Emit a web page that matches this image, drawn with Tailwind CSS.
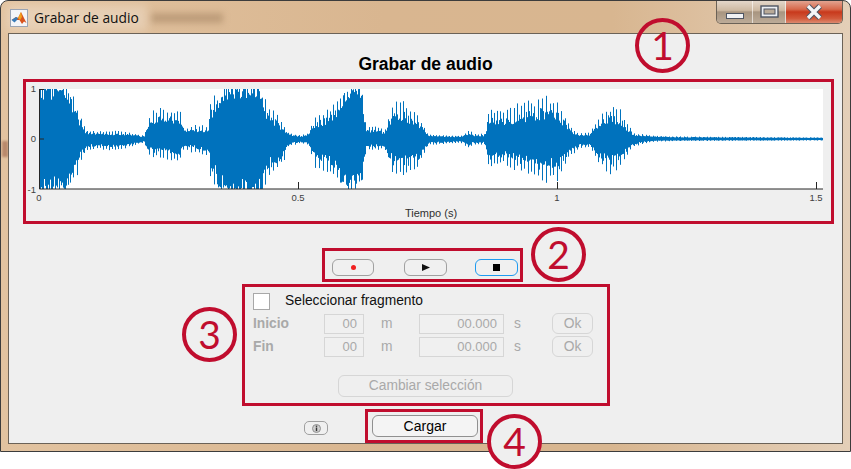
<!DOCTYPE html>
<html>
<head>
<meta charset="utf-8">
<script src="https://cdn.jsdelivr.net/npm/@tailwindcss/browser@4"></script>
</head>
<body class="m-0 w-[851px] h-[469px] overflow-hidden bg-white font-['Liberation_Sans',Arial,sans-serif]">
<div class="relative w-[851px] h-[452px] flex flex-col overflow-hidden rounded-t-[8px] border border-[#3c3c3c] bg-[linear-gradient(90deg,#e2c3a0_0%,#d9b690_45%,#d8b690_72%,#e4cfb8_100%)]">
  <div class="absolute left-[1px] top-[140px] w-[6px] h-[16px] bg-[#b98a6c] blur-[1px]"></div>
  <div class="absolute left-[150px] top-[12px] w-[72px] h-[10px] bg-[#b0906e]/70 blur-[3px]"></div>
  <div class="absolute left-[6px] top-[4px] w-[140px] h-[26px] bg-white/25 blur-[5px]"></div>

  <!-- title bar -->
  <div class="relative h-[33px] shrink-0 flex items-center pl-[9px] pr-[8px] -mt-px">
    <svg class="w-[18px] h-[18px] shrink-0 mt-[3px]" viewBox="0 0 18 18">
      <rect x="0.5" y="0.5" width="17" height="17" fill="#f4f5f8" stroke="#9aa4b4"/>
      <path d="M1.5 11 L6 8 L8 9 L11 3 L13 7 L16.5 14 L14 12.5 L12 15 L9.5 11 Z" fill="#d9541e"/>
      <path d="M1.5 11 L6 8 L8 9 L7 11 L4.5 13.5 Z" fill="#3a7cb8"/>
      <path d="M8 9 L11 3 L12 8 L10 11 Z" fill="#f2a21e"/>
    </svg>
    <span class="ml-[6px] mt-[3px] text-[13.8px] leading-none text-[#101010] font-['Open_Sans',sans-serif]">Grabar de audio</span>
    <div class="ml-auto -mr-[1px] -mt-[9px] flex h-[24px] w-[127px] overflow-hidden rounded-b-[5px] border border-t-0 border-[#6b6257]">
      <div class="w-[36px] flex items-center justify-center border-r border-white/60 bg-[linear-gradient(180deg,#e6dace_0%,#cdb9a2_45%,#a89580_52%,#bcab98_100%)]">
        <svg class="w-[18px] h-[6px] mt-[9px]" viewBox="0 0 18 6"><rect x="0.5" y="0.5" width="17" height="5" fill="#f2f2f4" stroke="#4e5563"/></svg>
      </div>
      <div class="w-[33px] flex items-center justify-center border-r border-white/60 bg-[linear-gradient(180deg,#e6dace_0%,#cdb9a2_45%,#a89580_52%,#bcab98_100%)]">
        <svg class="w-[19px] h-[13px]" viewBox="0 0 19 13"><rect x="1" y="1" width="17" height="11" fill="#eceef2" stroke="#4e5563" stroke-width="1.4"/><rect x="4" y="4" width="11" height="5" fill="#b9aa98" stroke="#4e5563"/></svg>
      </div>
      <div class="flex-1 flex items-center justify-center bg-[linear-gradient(180deg,#e4aa98_0%,#d8694c_40%,#c8391c_52%,#d2593a_80%,#dc8a70_100%)]">
        <svg class="w-[18px] h-[16px]" viewBox="0 0 18 16"><path d="M3 2 L15 14 M15 2 L3 14" stroke="#4e5563" stroke-width="5.4" fill="none"/><path d="M3 2 L15 14 M15 2 L3 14" stroke="#f5f5f7" stroke-width="3.4" fill="none"/></svg>
      </div>
    </div>
  </div>

  <!-- client panel -->
  <div class="relative ml-[7px] mr-[7px] mb-[7px] flex-1 flex flex-col items-center border border-[#6b6257] bg-[#efefef]">
    <h1 class="mt-[21px] h-[18px] text-[17.5px] leading-[18px] font-bold text-black">Grabar de audio</h1>

    <!-- plot: axes drawn on a canvas of their own -->
    <svg class="mt-[9px] self-start ml-[15px] w-[810px] h-[140px]" viewBox="0 0 810 140" font-family="Liberation Sans, Arial, sans-serif" font-size="9.5" fill="#404040">
      <rect x="15" y="7" width="784" height="100" fill="#fff"/>
      <path id="wave" d="" stroke="#0072bd" stroke-width="1" fill="none"/>
      <path d="M15.5 7 V107 H799 M15.5 7.5 H20 M15.5 57 H20 M274.5 107 V100 M533.5 107 V100 M792.5 107 V100" stroke="#262626" stroke-width="1" fill="none"/>
      <text x="12" y="10" text-anchor="end">1</text>
      <text x="12" y="60" text-anchor="end">0</text>
      <text x="12" y="111" text-anchor="end">-1</text>
      <text x="15" y="119" text-anchor="middle">0</text>
      <text x="274" y="119" text-anchor="middle">0.5</text>
      <text x="533" y="119" text-anchor="middle">1</text>
      <text x="792" y="119" text-anchor="middle">1.5</text>
      <text x="407" y="135" text-anchor="middle" font-size="11" fill="#303030">Tiempo (s)</text>
    </svg>

    <!-- transport buttons -->
    <div class="mt-[37px] self-start ml-[323px] flex items-center h-[16px]">
      <button class="w-[42px] h-[17px] flex items-center justify-center rounded-[6px] border border-[#a0a0a0] bg-[#f0f0f0]"><span class="w-[5px] h-[5px] rounded-full bg-[#f02020]"></span></button>
      <button class="ml-[30px] w-[43px] h-[17px] flex items-center justify-center rounded-[6px] border border-[#a0a0a0] bg-[#f0f0f0]"><svg class="w-[8px] h-[7px]" viewBox="0 0 8 7"><path d="M0 0 L8 3.5 L0 7Z" fill="#111"/></svg></button>
      <button class="ml-[28px] w-[43px] h-[17px] flex items-center justify-center rounded-[6px] border border-[#1e9bf0] bg-[#f0f0f0]"><span class="w-[7px] h-[7px] bg-black"></span></button>
    </div>

    <!-- selection section -->
    <div class="mt-[17px] self-start ml-[244px] w-[345px] text-[13.8px] leading-none">
      <div class="flex items-center h-[18px]">
        <span class="w-[17px] h-[17px] bg-white border border-[#a8a8a8]"></span>
        <span class="ml-[15px] text-[#111]">Seleccionar fragmento</span>
      </div>
      <div class="mt-[3px] grid grid-cols-[71px_40px_55px_85px_48px_41px] grid-rows-[21px_21px] gap-y-[2px] items-center text-[#a9a9a9]">
        <span class="font-bold">Inicio</span>
        <span class="h-[20px] pr-[6px] flex items-center justify-end border border-[#d6d6d6] bg-[#f0f0f0] text-[13px]">00</span>
        <span class="pl-[17px]">m</span>
        <span class="h-[20px] pr-[6px] flex items-center justify-end border border-[#d6d6d6] bg-[#f0f0f0] text-[13px]">00.000</span>
        <span class="pl-[10px]">s</span>
        <span class="h-[21px] flex items-center justify-center rounded-[6px] border border-[#d6d6d6]">Ok</span>
        <span class="font-bold">Fin</span>
        <span class="h-[20px] pr-[6px] flex items-center justify-end border border-[#d6d6d6] bg-[#f0f0f0] text-[13px]">00</span>
        <span class="pl-[17px]">m</span>
        <span class="h-[20px] pr-[6px] flex items-center justify-end border border-[#d6d6d6] bg-[#f0f0f0] text-[13px]">00.000</span>
        <span class="pl-[10px]">s</span>
        <span class="h-[21px] flex items-center justify-center rounded-[6px] border border-[#d6d6d6]">Ok</span>
      </div>
      <div class="mt-[18px] ml-[85px] w-[175px] h-[22px] flex items-center justify-center rounded-[6px] border border-[#d6d6d6] text-[#a9a9a9]">Cambiar selección</div>
    </div>

    <!-- bottom row -->
    <div class="mt-[18px] self-start ml-[295px] flex items-center h-[22px]">
      <button class="mt-[4px] w-[24px] h-[14px] flex items-center justify-center rounded-[5px] border border-[#a0a0a0] bg-[#f0f0f0]">
        <svg class="w-[9px] h-[9px]" viewBox="0 0 9 9"><circle cx="4.5" cy="4.5" r="4" fill="#d0d0d0" stroke="#909090"/><rect x="3.8" y="3.5" width="1.4" height="3.6" fill="#333"/><rect x="3.8" y="1.6" width="1.4" height="1.3" fill="#333"/></svg>
      </button>
      <button class="ml-[44px] w-[106px] h-[22px] flex items-center justify-center rounded-[6px] border border-[#909090] bg-[#f4f4f4] text-[14px] text-black">Cargar</button>
    </div>
  </div>

  <!-- annotations over the screenshot -->
  <div class="absolute left-[22px] top-[78px] w-[811px] h-[145px] border-[3px] border-[#c00d2e]"></div>
  <div class="absolute left-[321px] top-[247px] w-[201px] h-[34px] border-[3px] border-[#c00d2e]"></div>
  <div class="absolute left-[241px] top-[283px] w-[368px] h-[122px] border-[3px] border-[#c00d2e]"></div>
  <div class="absolute left-[364px] top-[408px] w-[118px] h-[34px] border-[3px] border-[#c00d2e]"></div>
  <div class="absolute left-[634px] top-[17px] w-[55px] h-[55px] rounded-full border-[4px] border-[#c00d2e] flex items-center justify-center font-['Lato',sans-serif] text-[39px] leading-none text-[#c00d2e]">1</div>
  <div class="absolute left-[530px] top-[226px] w-[55px] h-[55px] rounded-full border-[4px] border-[#c00d2e] bg-[#efefef] flex items-center justify-center font-['Lato',sans-serif] text-[39px] leading-none text-[#c00d2e]">2</div>
  <div class="absolute left-[181px] top-[306px] w-[55px] h-[55px] rounded-full border-[4px] border-[#c00d2e] bg-[#efefef] flex items-center justify-center font-['Lato',sans-serif] text-[39px] leading-none text-[#c00d2e]">3</div>
</div>
<div class="absolute left-[487px] top-[414px] w-[55px] h-[55px] rounded-full border-[4px] border-[#c00d2e] bg-[#efefef] flex items-center justify-center font-['Lato',sans-serif] text-[39px] leading-none text-[#c00d2e]">4</div>
<script>
(function(){
var E=[[39,1.25,1.25],[62,1.15,1.15],[72,1,1],[78,.65,.7],[82,.45,.45],[86,.2,.24],[90,.16,.2],[120,.15,.22],[135,.1,.12],[145,.06,.06],[147,.35,.3],[155,.62,.38],[170,.64,.42],[180,.58,.42],[184,.22,.22],[200,.3,.3],[208,.28,.32],[211,.85,.9],[220,1,1.1],[230,1.25,1.25],[260,1.25,1.25],[265,.8,.95],[275,.58,.72],[283,.32,.52],[288,.12,.15],[300,.07,.08],[308,.1,.1],[315,.48,.58],[325,.58,.68],[340,.88,.98],[350,1.2,1.2],[362,1.2,1],[366,.3,.25],[385,.2,.2],[388,.38,.42],[393,.72,.72],[405,.78,.74],[415,.58,.72],[423,.3,.4],[428,.08,.12],[460,.05,.06],[470,.18,.18],[473,.1,.1],[485,.1,.1],[488,.58,.58],[500,.58,.48],[520,.72,.68],[545,.88,.88],[560,.72,.82],[565,.52,.62],[570,.25,.35],[580,.1,.2],[590,.13,.15],[600,.48,.58],[610,.68,.72],[620,.62,.58],[628,.3,.3],[634,.12,.15],[650,.06,.05],[680,.04,.03],[823,.02,.02]];
var s=12345;function R(){s=(s*1664525+1013904223)%4294967296;return s/4294967296;}
function env(x){for(var i=1;i<E.length;i++){if(x<=E[i][0]){var a=E[i-1],b=E[i],t=(x-a[0])/(b[0]-a[0]);return[a[1]+(b[1]-a[1])*t,a[2]+(b[2]-a[2])*t];}}return[.02,.02];}
var d="",next=39;
for(var x=39;x<823;x++){
  var e=env(x+.5),spike=false;
  if(x>=next){spike=true;next=x+3+Math.floor(R()*2);}
  var loud=Math.max(e[0],e[1])>1;
  var lo=loud?.62:.42,span=.3;
  var kt=spike?(1-R()*.22):(lo+R()*span),kb=spike?(1-R()*.22):(lo+R()*span);
  var y1=Math.max(7,57-50*e[0]*kt-.6),y2=Math.min(107,57+50*e[1]*kb+.6);
  var px=x-24+.5;
  d+="M"+px+" "+y1.toFixed(1)+"V"+y2.toFixed(1);
}
document.getElementById("wave").setAttribute("d",d);
})();
</script>
</body>
</html>
